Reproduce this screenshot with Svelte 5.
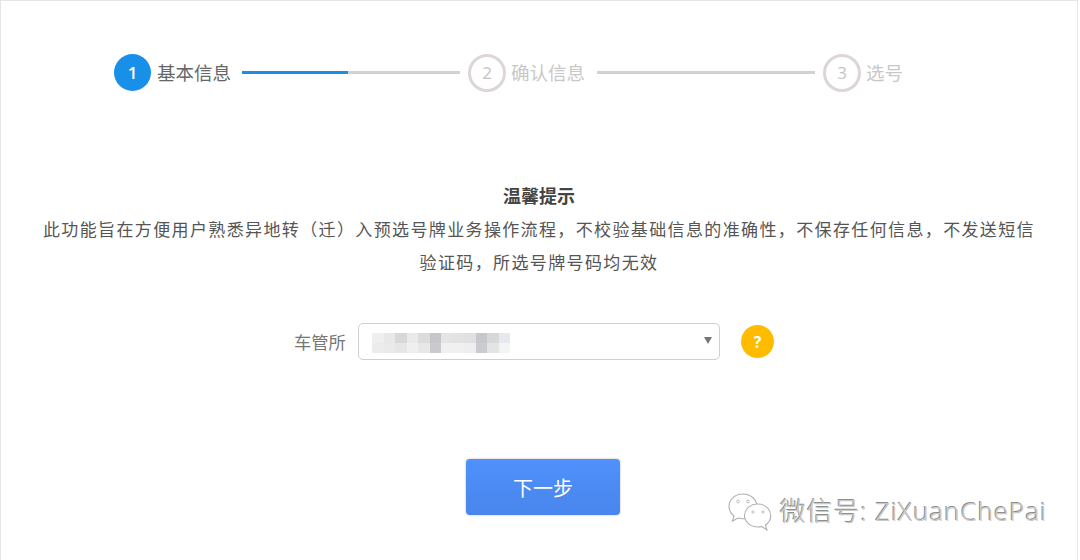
<script>
  const cells = [
    ['#efefef','#e8e8e8','#d8d8d8','#eaeaea','#dcdcdc','#c6c6ca','#e4e4e4','#e2e2e4','#e0e0e0','#c6c8cc','#d8d8d8','#e6eaee'],
    ['#ececec','#eaeaea','#e6e6e6','#efefef','#e8e8e8','#cacace','#f0f0f0','#f0f0f0','#eeeeee','#caccd0','#e4e4e4','#f2f4f6']
  ];
</script>

<div class="page">
  <div class="steps">
    <span class="num active">1</span>
    <span class="label current">基本信息</span>
    <span class="line first"><span class="fill"></span></span>
    <span class="num">2</span>
    <span class="label">确认信息</span>
    <span class="line second"></span>
    <span class="num">3</span>
    <span class="label">选号</span>
  </div>

  <div class="notice">
    <h2>温馨提示</h2>
    <p>此功能旨在方便用户熟悉异地转（迁）入预选号牌业务操作流程，不校验基础信息的准确性，不保存任何信息，不发送短信<br />验证码，所选号牌号码均无效</p>
  </div>

  <div class="field">
    <span class="field-label">车管所</span>
    <div class="select">
      <div class="blur">
        {#each cells as row}
          <div class="row">
            {#each row as c}
              <span style="background:{c}"></span>
            {/each}
          </div>
        {/each}
      </div>
      <span class="caret"></span>
    </div>
    <span class="help">?</span>
  </div>

  <div class="actions">
    <button type="button">下一步</button>
  </div>

  <div class="mark">
    <svg width="46" height="40" viewBox="0 0 46 40" fill="#fff" stroke="#b0b0b0" stroke-width="1.1">
      <path d="M15 1C7 1 1 6.400 1 13.500c0 3.900 2 7.100 5 9.500l-1.600 5 5.600-3c1.700.5 3.400.8 5 .8 8 0 14-5.600 14-12.300S23 1 15 1z" />
      <path d="M30 11c-7.500 0-13.500 5.100-13.500 11.500S22.500 34 30 34c1.300 0 2.700-.2 3.900-.5l5 3.500-1.500-5c3.300-2.100 5.300-5.700 5.300-9.500C42.700 16.100 37 11 30 11z" />
      <circle cx="10" cy="8.500" r="1.400" fill="none" stroke-width=".8" />
      <circle cx="20" cy="8.500" r="1.400" fill="none" stroke-width=".8" />
      <circle cx="25" cy="19" r="1.100" fill="none" stroke-width=".8" />
      <circle cx="35" cy="19" r="1.100" fill="none" stroke-width=".8" />
    </svg>
    <span>微信号: ZiXuanChePai</span>
  </div>
</div>

<style>
  :global(body) {
    margin: 0;
    background: #fff;
  }

  .page {
    position: relative;
    box-sizing: border-box;
    width: 1078px;
    height: 560px;
    overflow: hidden;
    background: #fff;
    border-top: 1px solid #e6e6e6;
    border-left: 1px solid #e6e6e6;
    border-right: 1px solid #e6e6e6;
    font-family: "Open Sans", "Noto Sans CJK SC", sans-serif;
    color: #555;
  }

  .steps {
    display: flex;
    align-items: center;
    height: 37px;
    margin-top: 53px;
    padding-left: 113px;
  }

  .num {
    box-sizing: border-box;
    flex: none;
    display: flex;
    align-items: center;
    justify-content: center;
    width: 38px;
    height: 38px;
    border: 3px solid #dcd6d6;
    border-radius: 50%;
    font-size: 17px;
    color: #c4c4c4;
  }

  .num.active {
    width: 37px;
    height: 37px;
    border: 0;
    background: #1890ea;
    color: #fff;
    font-weight: 600;
  }

  .label {
    margin-left: 5px;
    margin-bottom: 2px;
    font-size: 18.500px;
    color: #c8c8c8;
    white-space: nowrap;
  }

  .label.current {
    margin-left: 6px;
    color: #666;
  }

  .line {
    flex: none;
    display: block;
    width: 218px;
    height: 3px;
    background: #d4d0d0;
  }

  .line.first {
    margin: 0 8px 0 11px;
  }

  .line.second {
    margin: 0 8px 0 12px;
  }

  .fill {
    display: block;
    width: 106px;
    height: 100%;
    background: #1890ea;
  }

  .notice {
    margin-top: 88px;
    text-align: center;
  }

  h2 {
    margin: 0;
    font-size: 18px;
    font-weight: 700;
    line-height: 34px;
    color: #444;
  }

  p {
    margin: 0;
    font-size: 17px;
    letter-spacing: 1.370px;
    line-height: 33px;
    color: #555;
    white-space: nowrap;
  }

  .field {
    display: flex;
    align-items: center;
    height: 37px;
    margin-top: 44px;
    padding-left: 293px;
  }

  .field-label {
    width: 64px;
    margin-bottom: 1px;
    font-size: 17.300px;
    color: #777;
  }

  .select {
    box-sizing: border-box;
    position: relative;
    width: 362px;
    height: 37px;
    border: 1px solid #cfcfcf;
    border-radius: 5px;
    background: #fff;
  }

  .blur {
    position: absolute;
    left: 13px;
    top: 9px;
    width: 138px;
    filter: blur(0.600px);
  }

  .row {
    display: flex;
    height: 10px;
  }

  .row span {
    flex: 1;
  }

  .caret {
    position: absolute;
    right: 7px;
    top: 13px;
    border-style: solid;
    border-width: 7px 4px 0;
    border-color: #777 transparent transparent;
  }

  .help {
    display: flex;
    align-items: center;
    justify-content: center;
    width: 33px;
    height: 33px;
    margin-left: 21px;
    border-radius: 50%;
    background: #ffbb00;
    color: #fff;
    font-size: 16px;
    font-weight: 700;
  }

  .actions {
    margin-top: 99px;
    padding-left: 465px;
  }

  button {
    display: block;
    width: 154px;
    height: 56px;
    border: 0;
    border-radius: 4px;
    background: linear-gradient(#4f91fc, #4985ec);
    box-shadow: 0 0 2px rgba(0, 0, 0, 0.35);
    color: #fff;
    font-family: inherit;
    font-size: 20px;
  }

  .mark {
    position: absolute;
    left: 727px;
    top: 491px;
    display: flex;
    align-items: center;
    gap: 6px;
    font-size: 26px;
    line-height: 38px;
    white-space: nowrap;
    color: #c9c9c9;
    text-shadow: -1px -1px 0 #8e8e8e, 1px 1px 0 #fff;
  }

  .mark span {
    margin-bottom: 3px;
    font-family: "Noto Sans", "Noto Sans CJK SC", sans-serif;
    font-weight: 300;
    letter-spacing: 0.850px;
  }
</style>
